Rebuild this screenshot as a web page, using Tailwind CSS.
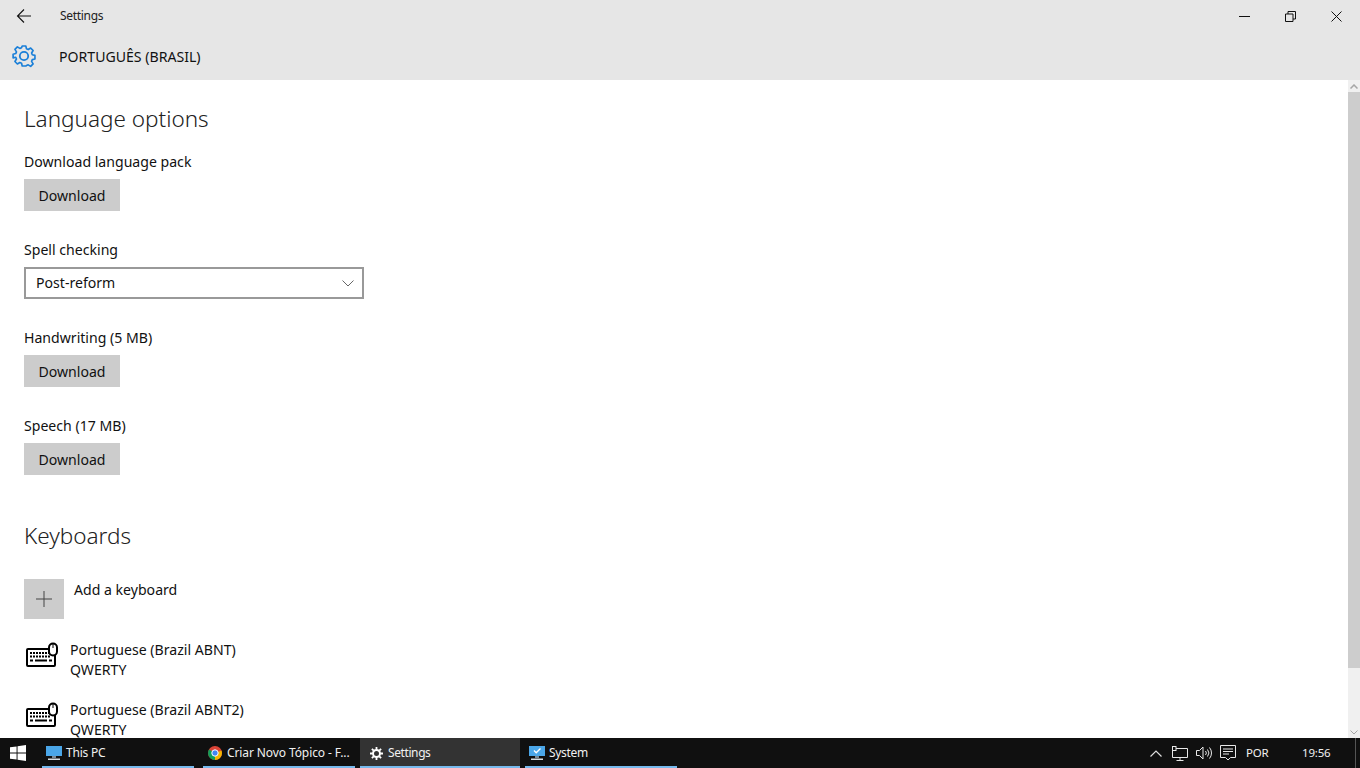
<!DOCTYPE html>
<html lang="en">
<head>
<meta charset="UTF-8">
<title>Settings</title>
<script src="https://cdn.jsdelivr.net/npm/@tailwindcss/browser@4"></script>
</head>
<body class="w-[1360px] h-[768px] overflow-hidden flex flex-col bg-white text-black font-['Noto_Sans','Open_Sans',sans-serif]">

<!-- title bar -->
<div class="h-[32px] shrink-0 bg-[#e6e6e6] flex items-center">
  <div class="w-[48px] flex justify-center">
    <svg width="16" height="16" viewBox="0 0 16 16" fill="none" stroke="#111" stroke-width="1.1"><path d="M1.5 8H15M8 1.5 1.5 8 8 14.5"/></svg>
  </div>
  <span class="ml-[12px] text-[12px] tracking-[-0.3px] text-[#222]">Settings</span>
  <div class="ml-auto mr-[1px] flex items-center">
    <div class="w-[46px] flex justify-center"><svg width="11" height="11" viewBox="0 0 11 11" stroke="#111"><path d="M0 5.5H11"/></svg></div>
    <div class="w-[46px] flex justify-center"><svg width="11" height="11" viewBox="0 0 11 11" fill="none" stroke="#111"><path d="M.5 3h7.500v7.500H.5zM3 3V.5h7.500V8H8"/></svg></div>
    <div class="w-[46px] flex justify-center"><svg width="11" height="11" viewBox="0 0 11 11" stroke="#111"><path d="M.5.5l10 10M10.500.5l-10 10"/></svg></div>
  </div>
</div>

<!-- page header -->
<div class="h-[48px] shrink-0 bg-[#e6e6e6] flex items-center">
  <svg class="ml-[12px]" width="24" height="24" viewBox="0 0 24 24" fill="none" stroke="#1a7fd8" stroke-width="1.800" stroke-linejoin="round">
    <circle cx="12" cy="12" r="4.200"/>
    <path d="M10 1h4l.7 3.100 1.900.8 2.700-1.700 2.700 2.800-1.700 2.700.8 1.900 2.900.7v4l-2.900.7-.8 1.900 1.700 2.700-2.700 2.800-2.700-1.700-1.900.8L14 23h-4l-.7-3.100-1.900-.8-2.700 1.700-2.700-2.800 1.700-2.700-.8-1.900L0 14v-4l2.900-.7.800-1.900L2 4.700 4.700 1.900l2.700 1.700 1.900-.8z" transform="translate(1.100 1.100) scale(.91)"/>
  </svg>
  <span class="ml-[23px] pt-[1px] text-[14.100px] text-[#111]">PORTUGUÊS (BRASIL)</span>
</div>

<!-- content + scrollbar -->
<div class="flex-1 min-h-0 flex">
  <div class="flex-1 overflow-hidden pl-[24px] pt-[21px] text-[14.100px] leading-[20px] text-[#111]">
    <h2 class="text-[22.500px] font-light leading-[36px] text-[#222]">Language options</h2>
    <p class="mt-[15px]">Download language pack</p>
    <button class="mt-[7px] pt-[2px] block w-[96px] h-[32px] bg-[#cccccc]">Download</button>

    <p class="mt-[29px]">Spell checking</p>
    <div class="mt-[7px] w-[340px] h-[32px] border-2 border-[#999999] flex items-center justify-between pl-[10px] pr-[8px]">
      <span>Post-reform</span>
      <svg width="12" height="7" viewBox="0 0 12 7" fill="none" stroke="#666"><path d="M.5.5 6 6 11.500.5"/></svg>
    </div>

    <p class="mt-[29px]">Handwriting (5 MB)</p>
    <button class="mt-[7px] pt-[2px] block w-[96px] h-[32px] bg-[#cccccc]">Download</button>

    <p class="mt-[29px]">Speech (17 MB)</p>
    <button class="mt-[7px] pt-[2px] block w-[96px] h-[32px] bg-[#cccccc]">Download</button>

    <h2 class="mt-[43px] text-[22.500px] font-light leading-[36px] text-[#222]">Keyboards</h2>

    <div class="mt-[25px] flex items-start">
      <div class="w-[40px] h-[40px] bg-[#cccccc] flex items-center justify-center">
        <svg width="16" height="16" viewBox="0 0 16 16" stroke="#444"><path d="M8 0v16M0 8h16"/></svg>
      </div>
      <span class="ml-[10px] pt-[1px]">Add a keyboard</span>
    </div>

    <div class="mt-[20px] flex items-start h-[40px]">
      <svg class="ml-[2px] mt-[3px]" width="32" height="26" viewBox="0 0 32 26" fill="none" stroke="#000" stroke-width="2">
        <rect x="1" y="7" width="28" height="17" rx="1"/>
        <path d="M4 11h20M4 14.500h20" stroke-dasharray="2 1"/>
        <path d="M4 18.500h3M9 18.500h12M23 18.500h3"/>
        <rect x="23" y="1.500" width="8" height="12" rx="4" fill="#fff"/>
        <path d="M27 2v4" stroke-width="1"/>
      </svg>
      <div class="ml-[12px] pt-[1px]">
        <p>Portuguese (Brazil ABNT)</p>
        <p>QWERTY</p>
      </div>
    </div>

    <div class="mt-[20px] flex items-start h-[40px]">
      <svg class="ml-[2px] mt-[3px]" width="32" height="26" viewBox="0 0 32 26" fill="none" stroke="#000" stroke-width="2">
        <rect x="1" y="7" width="28" height="17" rx="1"/>
        <path d="M4 11h20M4 14.500h20" stroke-dasharray="2 1"/>
        <path d="M4 18.500h3M9 18.500h12M23 18.500h3"/>
        <rect x="23" y="1.500" width="8" height="12" rx="4" fill="#fff"/>
        <path d="M27 2v4" stroke-width="1"/>
      </svg>
      <div class="ml-[12px] pt-[1px]">
        <p>Portuguese (Brazil ABNT2)</p>
        <p>QWERTY</p>
      </div>
    </div>
  </div>

  <!-- scrollbar -->
  <div class="w-[12px] shrink-0 bg-[#f0f0f0] flex flex-col">
    <div class="h-[12px] flex items-center justify-center">
      <svg width="8" height="5" viewBox="0 0 8 5" fill="none" stroke="#a6a6a6" stroke-width="1.500"><path d="M.5 4.500 4 1l3.500 3.500"/></svg>
    </div>
    <div class="h-[576px] bg-[#cdcdcd]"></div>
    <div class="mt-auto h-[12px] flex items-center justify-center">
      <svg width="8" height="5" viewBox="0 0 8 5" fill="none" stroke="#a6a6a6" stroke-width="1"><path d="M.5.500 4 4 7.500.500"/></svg>
    </div>
  </div>
</div>

<!-- taskbar -->
<div class="h-[30px] shrink-0 bg-[#101010] flex text-[12px] text-[#f0f0f0] tracking-[-0.2px]">
  <div class="w-[42px] flex items-center pl-[10px]">
    <svg width="16" height="16" viewBox="0 0 17 17" fill="#fff"><path d="M0 2.500 7 1.500v6.500H0zM8 1.300 17 0v8H8zM0 9h7v6.500L0 14.500zM8 9h9v8L8 15.700z"/></svg>
  </div>
  <div class="w-[152px] border-b-[2px] border-[#76b9ed] flex items-center pl-[4px] pt-[2px]">
    <svg width="16" height="16" viewBox="0 0 16 16"><rect x="0" y="1" width="16" height="10" fill="#4aa6e8"/><path d="M6 11h4v2H6z" fill="#7a8a96"/><path d="M2 13.500h12v1.500H2z" fill="#d7dde2"/></svg>
    <span class="ml-[4px]">This PC</span>
  </div>
  <div class="w-[9px]"></div>
  <div class="w-[152px] border-b-[2px] border-[#76b9ed] flex items-center pl-[5px] pt-[2px]">
    <svg width="14" height="14" viewBox="0 0 14 14">
      <circle cx="7" cy="7" r="7" fill="#db4437"/>
      <path d="M7 7 1 3.500A7 7 0 0 0 7 14z" fill="#0f9d58"/>
      <path d="M7 7 13.500 4.500A7 7 0 0 1 7 14z" fill="#f4b400"/>
      <circle cx="7" cy="7" r="3.200" fill="#4285f4" stroke="#fff" stroke-width="1"/>
    </svg>
    <span class="ml-[5px] whitespace-nowrap tracking-[-0.1px]">Criar Novo Tópico - F...</span>
  </div>
  <div class="w-[5px]"></div>
  <div class="w-[160px] bg-[#333333] border-b-[2px] border-[#76b9ed] flex items-center pl-[10px] pt-[2px]">
    <svg width="13" height="13" viewBox="0 0 13 13" fill="none" stroke="#fff" stroke-width="2"><circle cx="6.500" cy="6.500" r="3.500"/><path d="M6.500 0v2.500M6.500 10.500V13M0 6.500h2.500M10.500 6.500H13M1.900 1.900l1.800 1.800M9.300 9.300l1.800 1.800M1.900 11.100l1.800-1.800M9.300 3.700l1.800-1.800" stroke-width="1.800"/></svg>
    <span class="ml-[5px] tracking-[-0.4px]">Settings</span>
  </div>
  <div class="w-[5px]"></div>
  <div class="w-[152px] border-b-[2px] border-[#76b9ed] flex items-center pl-[4px] pt-[2px]">
    <svg width="16" height="16" viewBox="0 0 16 16"><rect x="0" y="1" width="16" height="10" fill="#4aa6e8"/><path d="m5 5.500 2.200 2.200L11.500 3.500" fill="none" stroke="#fff" stroke-width="1.400"/><path d="M6 11h4v2H6z" fill="#7a8a96"/><path d="M2 13.500h12v1.500H2z" fill="#d7dde2"/></svg>
    <span class="ml-[4px] tracking-[-0.3px]">System</span>
  </div>

  <!-- tray -->
  <div class="ml-auto flex items-center">
    <svg width="12" height="7" viewBox="0 0 12 7" fill="none" stroke="#ddd" stroke-width="1.200"><path d="M.5 6.500 6 1l5.500 5.500"/></svg>
    <svg class="ml-[10px]" width="16" height="15" viewBox="0 0 16 15" fill="none" stroke="#e8e8e8"><path d="M3 2.500h12.500v9h-15V5M8 11.500v2.500M4.500 14.500h7"/><rect x=".5" y=".5" width="3.500" height="4" fill="#101010"/></svg>
    <svg class="ml-[8px]" width="16" height="14" viewBox="0 0 16 14" fill="none" stroke="#e8e8e8"><path d="M.5 4.500h3L7 1v12L3.500 9.500h-3zM9.500 5a3 3 0 0 1 0 4M11.500 3.500a5.500 5.500 0 0 1 0 7M13.500 1.500a8.500 8.500 0 0 1 0 11"/></svg>
    <svg class="ml-[8px]" width="16" height="16" viewBox="0 0 16 16" fill="none" stroke="#e8e8e8"><path d="M.5.500h15v12h-5L8 15l-2.500-2.500h-5zM3 4h10M3 6.500h10M3 9h6"/></svg>
    <span class="ml-[10px] w-[24px] text-[11.500px]">POR</span>
    <span class="ml-[32px] w-[26px] text-[11.500px]">19:56</span>
    <div class="w-[1px] h-full bg-[#555] ml-[27px] mr-[4px]"></div>
  </div>
</div>

</body>
</html>
